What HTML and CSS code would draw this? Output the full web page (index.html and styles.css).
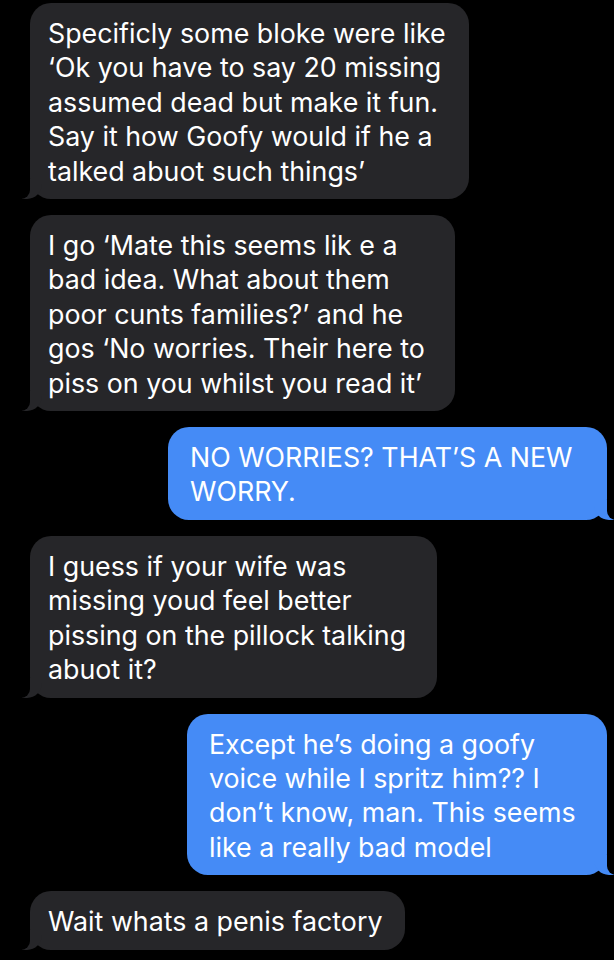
FILE: index.html
```html
<!DOCTYPE html>
<html lang="en">
<head>
<meta charset="utf-8">
<title>Messages</title>
<link rel="stylesheet" href="styles.css">
</head>
<body>
<main class="thread">
  <div class="bubble in w1">Specificly some bloke were like<br>‘Ok you have to say 20 missing<br>assumed dead but make it fun.<br>Say it how Goofy would if he a<br>talked abuot such things’</div>
  <div class="bubble in w2">I go ‘Mate this seems lik e a<br>bad idea. What about them<br>poor cunts families?’ and he<br>gos ‘No worries. Their here to<br>piss on you whilst you read it’</div>
  <div class="bubble out w3">NO WORRIES? THAT’S A NEW<br>WORRY.</div>
  <div class="bubble in w4">I guess if your wife was<br>missing youd feel better<br>pissing on the pillock talking<br>abuot it?</div>
  <div class="bubble out w5">Except he’s doing a goofy<br>voice while I spritz him?? I<br>don’t know, man. This seems<br>like a really bad model</div>
  <div class="bubble in w6">Wait whats a penis factory</div>
</main>
</body>
</html>
```

FILE: styles.css
```css
html, body {
  margin: 0;
  padding: 0;
  background: #000;
}
body {
  width: 614px;
  height: 960px;
  overflow: hidden;
  font-family: Inter, "Noto Sans", "Liberation Sans", sans-serif;
  color: #fff;
}
.thread {
  display: flex;
  flex-direction: column;
  gap: 16px;
  padding: 3px 7px 0 30px;
}
.bubble {
  position: relative;
  box-sizing: border-box;
  font-size: 26.8px;
  line-height: 34.4px;
  padding: 13px 8px 11px 18px;
  border-radius: 21px;
  white-space: nowrap;
}
.in {
  align-self: flex-start;
  background: #262629;
}
.out {
  align-self: flex-end;
  background: #458bf6;
  padding-left: 22px;
}
.in::before,
.out::before {
  content: "";
  position: absolute;
  bottom: 0;
  height: 20px;
  width: 20px;
}
.in::after,
.out::after {
  content: "";
  position: absolute;
  bottom: 0;
  width: 10px;
  height: 20px;
  background: #000;
}
.in::before {
  left: -8px;
  background: #262629;
  border-bottom-right-radius: 15px;
}
.in::after {
  left: -10px;
  border-bottom-right-radius: 9px;
}
.out::before {
  right: -7px;
  background: #458bf6;
  border-bottom-left-radius: 15px;
}
.out::after {
  right: -10px;
  border-bottom-left-radius: 9px;
}
.w1 { width: 439px; }
.w2 { width: 425px; }
.w3 { width: 439px; }
.w4 { width: 407px; }
.w5 { width: 420px; }
.w6 { width: 375px; }
```
